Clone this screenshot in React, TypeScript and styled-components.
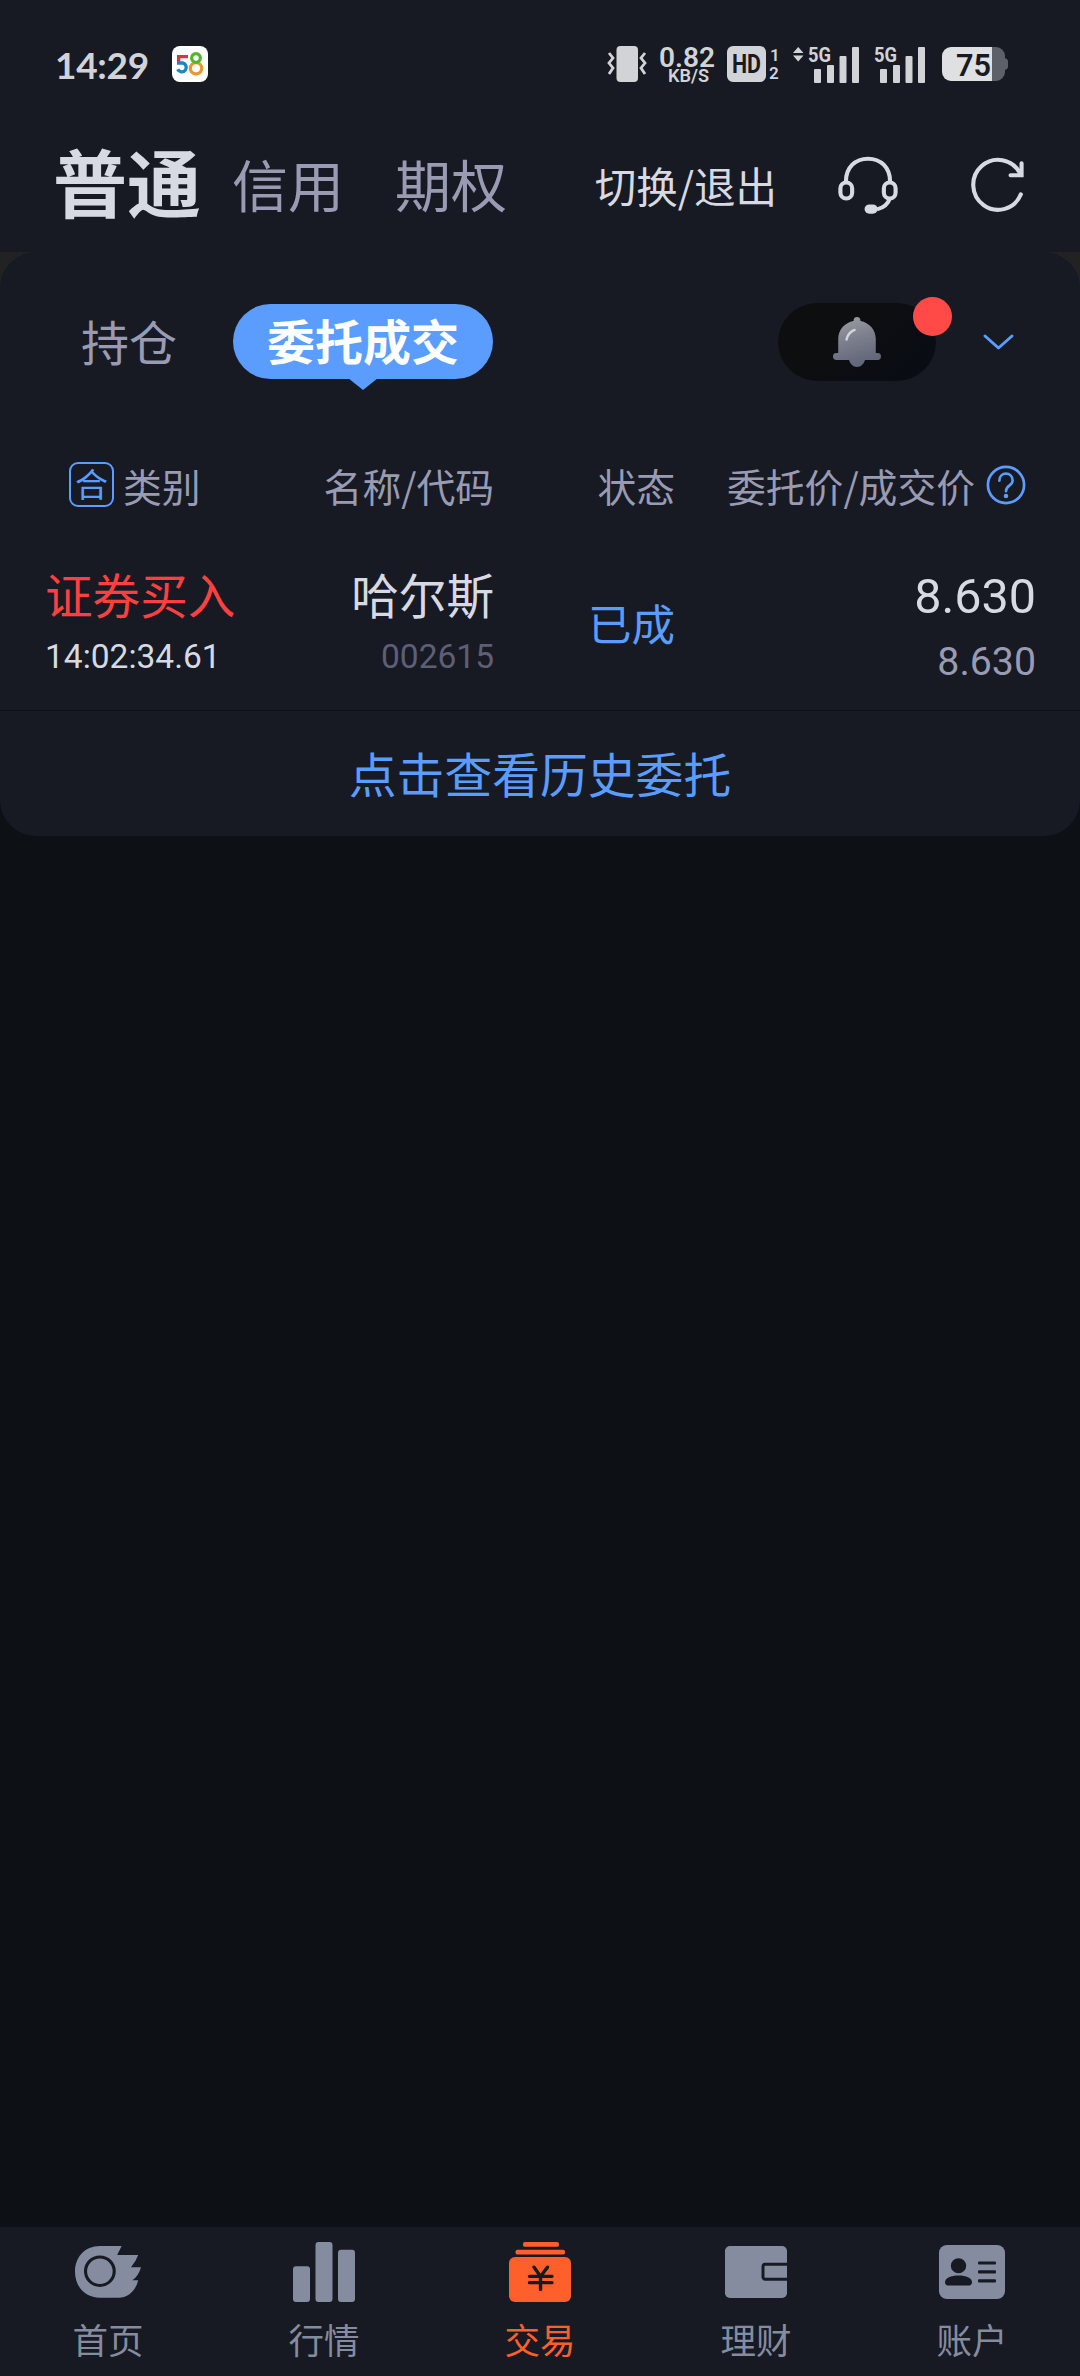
import React from "react";
import styled, { createGlobalStyle } from "styled-components";

const color = {
  page: "#0d1015",
  panel: "#171a23",
  corner: "#222222",
  text: "#d7d9e3",
  muted: "#999bb3",
  faint: "#5d5f76",
  blue: "#5a9dff",
  red: "#ff4040",
  nav: "#858c9f",
  orange: "#ff5f2b",
  status: "#d2d3d6",
};

const cjk = `"Noto Sans CJK SC", "Noto Sans", sans-serif`;
const latin = `Roboto, "Noto Sans CJK SC", sans-serif`;

const GlobalStyle = createGlobalStyle`
  * { box-sizing: border-box; }
  body { margin: 0; background: ${color.page}; font-family: ${cjk}; }
  svg { display: block; flex: none; overflow: visible; }
`;

const Screen = styled.div`
  width: 1080px;
  height: 2376px;
  display: flex;
  flex-direction: column;
  background: ${color.page};
  overflow: hidden;
  white-space: nowrap;
`;

const StatusBar = styled.header`
  height: 128px;
  display: flex;
  align-items: center;
  padding: 0 72px 0 55px;
  background: ${color.panel};
  color: ${color.status};
`;

const Clock = styled.span`
  width: 117px;
  font: 700 37px/44px Lato, sans-serif;
  letter-spacing: -0.3px;
  padding-top: 2px;
`;

const StatusIcons = styled.div`
  margin-left: auto;
  display: flex;
  align-items: center;
`;

const StatusSlot = styled.div<{ $gap?: number }>`
  margin-left: ${(p) => p.$gap ?? 0}px;
`;

const TopNav = styled.nav`
  height: 124px;
  padding: 0 55px 14px 53px;
  display: flex;
  align-items: center;
  background: ${color.panel};
`;

const AccountTab = styled.button<{ $active?: boolean; $gap?: number }>`
  border: 0;
  padding: 0;
  background: none;
  margin-left: ${(p) => p.$gap ?? 0}px;
  margin-top: ${(p) => (p.$active ? -7 : 0)}px;
  font-family: ${cjk};
  font-weight: ${(p) => (p.$active ? 700 : 400)};
  font-size: ${(p) => (p.$active ? 74 : 56)}px;
  line-height: 80px;
  color: ${(p) => (p.$active ? color.text : color.muted)};
`;

const NavActions = styled.div`
  margin-left: auto;
  margin-top: 4px;
  display: flex;
  align-items: center;
  color: ${color.text};
`;

const SwitchLink = styled.span`
  font-size: 41.5px;
  line-height: 60px;
  margin-top: -1px;
  margin-right: 61px;
`;

const PanelBackdrop = styled.main`
  background: linear-gradient(${color.corner} 0 60px, ${color.page} 60px);
`;

const Panel = styled.section`
  background: ${color.panel};
  border-radius: 36px;
`;

const TabRow = styled.div`
  height: 180px;
  padding: 0 66px 0 81px;
  display: flex;
  align-items: center;
`;

const PlainTab = styled.span`
  width: 152px;
  margin-top: -5px;
  font-size: 48px;
  line-height: 64px;
  color: ${color.muted};
`;

const PillTab = styled.span`
  position: relative;
  width: 260px;
  height: 75px;
  margin-top: -1px;
  border-radius: 38px;
  background: ${color.blue};
  color: #fff;
  font-size: 48px;
  font-weight: 700;
  line-height: 71px;
  text-align: center;

  &::after {
    content: "";
    position: absolute;
    left: 115px;
    top: 74px;
    border: 15px solid transparent;
    border-top: 12px solid ${color.blue};
    border-bottom: 0;
  }
`;

const BellPill = styled.div`
  position: relative;
  margin-left: auto;
  margin-right: 47px;
  width: 158px;
  height: 78px;
  border-radius: 39px;
  background: linear-gradient(135deg, #0c0e10 40%, #090c15);
  display: flex;
  align-items: center;
  justify-content: center;
`;

const Dot = styled.i`
  position: absolute;
  right: -16px;
  top: -6px;
  width: 39px;
  height: 39px;
  border-radius: 50%;
  background: #ff4a48;
`;

const columns = "249px 200px 181px 1fr";

const HeadRow = styled.div`
  height: 105px;
  padding: 0 54px 0 45px;
  display: grid;
  grid-template-columns: ${columns};
  align-items: center;
  font-size: 38.8px;
  line-height: 56px;
  color: ${color.muted};
`;

const HeadCell = styled.div<{ $start?: boolean }>`
  display: flex;
  align-items: center;
  gap: ${(p) => (p.$start ? 9 : 11)}px;
  justify-content: ${(p) => (p.$start ? "flex-start" : "flex-end")};
  padding-left: ${(p) => (p.$start ? 24 : 0)}px;
`;

const MergeBadge = styled.span`
  width: 45px;
  height: 45px;
  border: 2px solid ${color.blue};
  border-radius: 9px;
  color: ${color.blue};
  font-size: 33px;
  line-height: 38px;
  text-align: center;
`;

const OrderRow = styled.div`
  height: 173px;
  padding: 0 44px 0 45px;
  display: grid;
  grid-template-columns: ${columns};
  color: ${color.text};
`;

const Stack = styled.div<{ $end?: boolean }>`
  display: flex;
  flex-direction: column;
  padding-top: 27px;
  text-align: ${(p) => (p.$end ? "right" : "left")};
`;

const Title = styled.span<{ $tone?: string }>`
  font-size: 47.6px;
  line-height: 60px;
  color: ${(p) => p.$tone ?? color.text};
`;

const Digits = styled.span<{ $tone?: string }>`
  margin-top: 13px;
  font-family: ${latin};
  font-size: 33.5px;
  line-height: 40px;
  color: ${(p) => p.$tone ?? color.text};
`;

const State = styled.span`
  padding-top: 56px;
  text-align: right;
  font-size: 43.5px;
  line-height: 60px;
  color: ${color.blue};
`;

const Price = styled.span<{ $dealt?: boolean }>`
  font-family: ${latin};
  font-size: ${(p) => (p.$dealt ? 39.3 : 48.5)}px;
  line-height: ${(p) => (p.$dealt ? 44 : 60)}px;
  margin-top: ${(p) => (p.$dealt ? 13 : 3)}px;
  color: ${(p) => (p.$dealt ? color.muted : color.text)};
`;

const HistoryLink = styled.a`
  display: block;
  height: 126px;
  border-top: 1px solid ${color.page};
  font-size: 47.8px;
  line-height: 124px;
  text-align: center;
  color: ${color.blue};
`;

const BottomNav = styled.nav`
  margin-top: auto;
  height: 149px;
  display: grid;
  grid-template-columns: repeat(5, 1fr);
  background: ${color.panel};
`;

const NavItem = styled.div<{ $active?: boolean }>`
  display: flex;
  flex-direction: column;
  align-items: center;
  padding-top: 11px;
  color: ${(p) => (p.$active ? color.orange : color.nav)};
  font-size: 35.5px;
  line-height: 44px;
`;

const NavIcon = styled.div`
  height: 68px;
  margin-bottom: 11px;
  display: flex;
  align-items: center;
`;

const App58 = () => (
  <svg width="36" height="36" viewBox="0 0 108 108" fill="none" strokeWidth="10">
    <rect width="108" height="108" rx="24" fill="#fff" />
    <path d="M48 32H20V49" stroke="#dd3340" />
    <path d="M15 51H32A13.500 13.500 0 1 1 17 70" stroke="#1c87c0" />
    <circle cx="72" cy="67" r="17" stroke="#ec9630" />
    <circle cx="72" cy="36" r="13" stroke="#55b52c" />
  </svg>
);

const Vibrate = () => (
  <svg width="40" height="36" viewBox="0 0 40 36" fill="none" stroke={color.status} strokeWidth="2.800">
    <rect x="9.500" y="0" width="21.500" height="36" rx="4" fill={color.status} stroke="none" />
    <path d="M2 7l4 5-4 5 4 5-4 6" />
    <path d="M38 7l-4 5 4 5-4 5 4 6" />
  </svg>
);

const Speed = () => (
  <svg width="56" height="38" viewBox="0 0 56 38" fill={color.status} fontFamily="Roboto, sans-serif" fontWeight="600">
    <text x="0" y="21.500" fontSize="27" textLength="56" lengthAdjust="spacingAndGlyphs">0.82</text>
    <text x="9" y="36.500" fontSize="18.500" textLength="41" lengthAdjust="spacingAndGlyphs">KB/S</text>
  </svg>
);

const HdBadge = () => (
  <svg width="52" height="36" viewBox="0 0 52 36" fill={color.status} fontFamily="Roboto, sans-serif" fontWeight="700">
    <rect width="39" height="36" rx="6" />
    <text x="5" y="27" fontSize="25" fill={color.panel} textLength="29" lengthAdjust="spacingAndGlyphs">HD</text>
    <text x="43" y="15" fontSize="17" fontWeight="600">1</text>
    <text x="42" y="33" fontSize="17" fontWeight="600">2</text>
  </svg>
);

const Signal = ({ arrows }: { arrows?: boolean }) => (
  <svg
    width={arrows ? 66 : 51}
    height="37"
    viewBox={arrows ? "-15 -1 66 37" : "0 -1 51 37"}
    fill={color.status}
    fontFamily="Roboto, sans-serif"
    fontWeight="700"
  >
    {arrows && <path d="M-15 6L-9.800 0-4.500 6zM-15 8.500L-9.800 14.500-4.500 8.500z" />}
    <text x="0" y="15" fontSize="21" textLength="23" lengthAdjust="spacingAndGlyphs">5G</text>
    <rect x="6" y="22" width="7" height="14" rx="1" />
    <rect x="19" y="18" width="7" height="18" rx="1" />
    <rect x="31.500" y="9" width="7" height="27" rx="1" />
    <rect x="44" y="0" width="7" height="36" rx="1" />
  </svg>
);

const Battery = () => (
  <svg width="66" height="34" viewBox="0 0 66 34">
    <path d="M50 0h4a9 9 0 0 1 9 9v2q3 1 3 3v6q0 2-3 3v2a9 9 0 0 1-9 9h-4z" fill="#5d6069" />
    <path d="M9 0h41v34H9a9 9 0 0 1-9-9V9a9 9 0 0 1 9-9z" fill="#dfe0e2" />
    <text x="14" y="28.500" fontFamily="Roboto, sans-serif" fontWeight="600" fontSize="31" fill={color.panel} textLength="35" lengthAdjust="spacingAndGlyphs">75</text>
  </svg>
);

const Headset = () => (
  <svg width="60" height="58" viewBox="861 106 174 175" preserveAspectRatio="none" fill="none" stroke="currentColor" strokeWidth="12">
    <path d="M884 183C884 140 912 114 948 114S1012 140 1012 183" />
    <rect x="868" y="186" width="34" height="48" rx="17" />
    <rect x="994" y="186" width="34" height="48" rx="17" />
    <path d="M1011 234C1006 252 992 262 974 267" />
    <rect x="938" y="252" width="38" height="28" rx="14" fill="currentColor" stroke="none" />
  </svg>
);

const Refresh = () => (
  <svg width="55" height="56" viewBox="1246 112 160 168" preserveAspectRatio="none" fill="none" stroke="currentColor" strokeWidth="12" strokeLinecap="round">
    <path d="M1394 224A72 75 0 1 1 1391 160" />
    <path d="M1396 131V167H1364" />
  </svg>
);

const Bell = () => (
  <svg width="48" height="50" viewBox="850 110 138 151" preserveAspectRatio="none">
    <defs>
      <linearGradient id="bell" x1="0" y1="0" x2="0.300" y2="1">
        <stop offset="0" stopColor="#a0a1a6" />
        <stop offset="0.500" stopColor="#7d808e" />
        <stop offset="1" stopColor="#626779" />
      </linearGradient>
    </defs>
    <path
      fill="url(#bell)"
      d="M909 122a10 12 0 0 1 20 0C954 127 973 148 973 176V219H978a10 10.500 0 0 1 0 21H942C938 253 930 261 919 261S900 253 896 240H860a10 10.500 0 0 1 0-21H865V176C865 148 884 127 909 122z"
    />
    <path d="M889 178Q893 157 912 149" fill="none" stroke="#d4d5da" strokeWidth="7" strokeLinecap="round" />
  </svg>
);

const Chevron = () => (
  <svg width="31" height="16" viewBox="0 0 31 16" fill="none" stroke={color.blue} strokeWidth="3" strokeLinecap="round" strokeLinejoin="round">
    <path d="M2 2L15.500 14 29 2" />
  </svg>
);

const Help = () => (
  <svg width="40" height="40" viewBox="0 0 42 42" fill="none" stroke={color.blue} strokeWidth="2.800">
    <circle cx="21" cy="21" r="19" />
    <path d="M14 16.500C14 6.500 28 6.500 28 16.500 28 21.500 21 21.500 21 27.500" strokeLinecap="round" />
    <circle cx="21" cy="32.500" r="2.400" fill={color.blue} stroke="none" />
  </svg>
);

const HomeIcon = () => (
  <svg width="66" height="52" viewBox="218 113 191 155" preserveAspectRatio="none">
    <path
      fill="currentColor"
      d="M290 113H353L340 140H401Q394 160 380 176H409Q402 202 384 215H401C393 248 370 267 345 267H290C246 267 218 233 218 190S246 113 290 113z"
    />
    <ellipse cx="290" cy="188" rx="41.500" ry="42.500" fill="none" stroke={color.panel} strokeWidth="9" />
  </svg>
);

const BarsIcon = () => (
  <svg width="62" height="60" viewBox="0 0 62 62" preserveAspectRatio="none" fill="currentColor">
    <rect x="0" y="25" width="17" height="37" rx="3" />
    <rect x="22.500" y="0" width="17" height="62" rx="3" />
    <rect x="45" y="8" width="17" height="54" rx="3" />
  </svg>
);

const TradeIcon = () => (
  <svg width="62" height="60" viewBox="0 0 62 62" preserveAspectRatio="none" fill="currentColor">
    <rect x="14" y="0" width="36" height="5" rx="2" />
    <rect x="6.500" y="8" width="49.500" height="5" rx="2" />
    <rect x="0" y="15.500" width="62" height="46.500" rx="6" />
    <path d="M25 26L31.500 35.500 38.500 26M31.500 35.500V49M20.500 35.500H43M20.500 42H43" fill="none" stroke={color.panel} strokeWidth="3.400" strokeLinecap="round" />
  </svg>
);

const WalletIcon = () => (
  <svg width="62" height="52" viewBox="0 0 62 54" preserveAspectRatio="none">
    <rect width="62" height="54" rx="5" fill="currentColor" />
    <path d="M62 19H40Q38 19 38 21V32.500Q38 34.500 40 34.500H62" fill="none" stroke={color.panel} strokeWidth="3" />
  </svg>
);

const AccountIcon = () => (
  <svg width="66" height="54" viewBox="0 0 66 56" preserveAspectRatio="none">
    <rect width="66" height="56" rx="8" fill="currentColor" />
    <g fill={color.panel}>
      <circle cx="19.500" cy="21.500" r="7.700" />
      <path d="M6 38.500C6 34 12 31.500 19.500 31.500S33 34 33 38.500Q33 42 29 42H10Q6 42 6 38.500z" />
      <rect x="39" y="17" width="18" height="3.200" rx="1" />
      <rect x="39" y="26.300" width="18" height="3.200" rx="1" />
      <rect x="39" y="35.600" width="18" height="3.200" rx="1" />
    </g>
  </svg>
);

const navItems = [
  { label: "首页", Icon: HomeIcon },
  { label: "行情", Icon: BarsIcon },
  { label: "交易", Icon: TradeIcon, active: true },
  { label: "理财", Icon: WalletIcon },
  { label: "账户", Icon: AccountIcon },
];

export default function App() {
  return (
    <Screen>
      <GlobalStyle />
      <StatusBar>
        <Clock>14:29</Clock>
        <App58 />
        <StatusIcons>
          <StatusSlot><Vibrate /></StatusSlot>
          <StatusSlot $gap={12}><Speed /></StatusSlot>
          <StatusSlot $gap={12}><HdBadge /></StatusSlot>
          <StatusSlot $gap={14}><Signal arrows /></StatusSlot>
          <StatusSlot $gap={15}><Signal /></StatusSlot>
          <StatusSlot $gap={17}><Battery /></StatusSlot>
        </StatusIcons>
      </StatusBar>
      <TopNav>
        <AccountTab $active>普通</AccountTab>
        <AccountTab $gap={31}>信用</AccountTab>
        <AccountTab $gap={51}>期权</AccountTab>
        <NavActions>
          <SwitchLink>切换/退出</SwitchLink>
          <Headset />
          <StatusSlot $gap={72}><Refresh /></StatusSlot>
        </NavActions>
      </TopNav>
      <PanelBackdrop>
        <Panel>
          <TabRow>
            <PlainTab>持仓</PlainTab>
            <PillTab>委托成交</PillTab>
            <BellPill>
              <Bell />
              <Dot />
            </BellPill>
            <Chevron />
          </TabRow>
          <HeadRow>
            <HeadCell $start><MergeBadge>合</MergeBadge>类别</HeadCell>
            <HeadCell>名称/代码</HeadCell>
            <HeadCell>状态</HeadCell>
            <HeadCell>委托价/成交价<Help /></HeadCell>
          </HeadRow>
          <OrderRow>
            <Stack>
              <Title $tone={color.red}>证券买入</Title>
              <Digits>14:02:34.61</Digits>
            </Stack>
            <Stack $end>
              <Title>哈尔斯</Title>
              <Digits $tone={color.faint}>002615</Digits>
            </Stack>
            <State>已成</State>
            <Stack $end>
              <Price>8.630</Price>
              <Price $dealt>8.630</Price>
            </Stack>
          </OrderRow>
          <HistoryLink>点击查看历史委托</HistoryLink>
        </Panel>
      </PanelBackdrop>
      <BottomNav>
        {navItems.map(({ label, Icon, active }) => (
          <NavItem key={label} $active={active}>
            <NavIcon><Icon /></NavIcon>
            {label}
          </NavItem>
        ))}
      </BottomNav>
    </Screen>
  );
}
